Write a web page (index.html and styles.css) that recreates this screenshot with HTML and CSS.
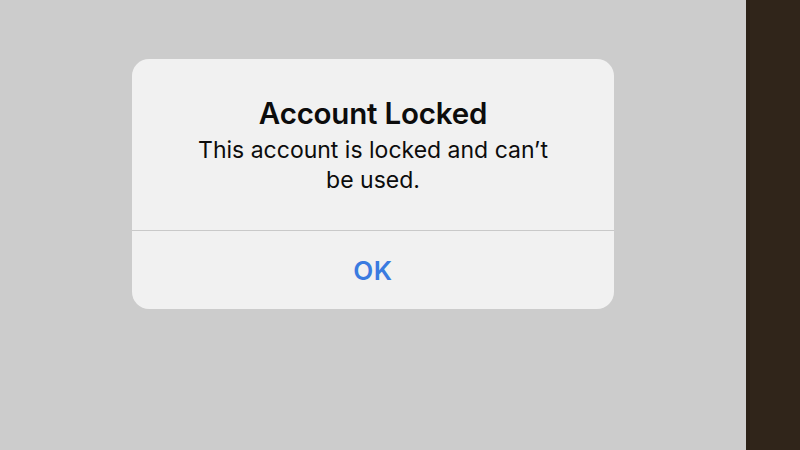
FILE: index.html
```html
<!DOCTYPE html>
<html>
<head>
<meta charset="utf-8">
<link rel="stylesheet" href="styles.css">
</head>
<body>
<div class="screen">
  <div class="stage">
    <div class="alert">
      <div class="alert-body">
        <div class="alert-title">Account Locked</div>
        <div class="alert-message">This account is locked and can’t<br>be used.</div>
      </div>
      <div class="alert-actions">
        <div class="alert-button">OK</div>
      </div>
    </div>
  </div>
  <div class="side"></div>
</div>
</body>
</html>
```
FILE: styles.css
```css
* { box-sizing: border-box; }
html, body {
  margin: 0;
  padding: 0;
  width: 800px;
  height: 450px;
  overflow: hidden;
  font-family: Inter, "Open Sans", "Liberation Sans", sans-serif;
}
.screen {
  display: flex;
  width: 800px;
  height: 450px;
}
.stage {
  width: 746px;
  height: 450px;
  background: #cccccc;
  padding: 59px 0 0 132px;
}
.side {
  flex: 1;
  background: #30251a;
  border-left: 4px solid #2a2016;
}
.alert {
  width: 482px;
  height: 250px;
  background: #f1f1f1;
  border-radius: 17px;
  display: flex;
  flex-direction: column;
}
.alert-body {
  height: 172px;
  border-bottom: 1px solid #c9c9c9;
  padding-top: 35px;
  text-align: center;
  color: #0c0c0c;
}
.alert-title {
  font-size: 29.5px;
  font-weight: 600;
  line-height: 38px;
  letter-spacing: -0.2px;
}
.alert-message {
  font-size: 23px;
  line-height: 30px;
  margin-top: 3px;
}
.alert-actions {
  flex: 1;
  display: flex;
  align-items: center;
  justify-content: center;
}
.alert-button {
  font-size: 26px;
  font-weight: 600;
  letter-spacing: 0.5px;
  color: #3a7be0;
}
```
